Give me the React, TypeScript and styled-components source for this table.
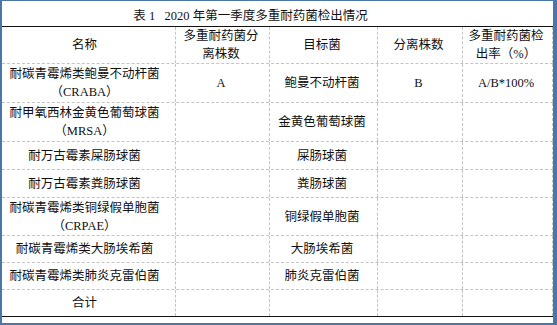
import React from 'react';
import styled, { createGlobalStyle } from 'styled-components';

// 表格数据 - 每行高度按截图量出来
type RowData = {
  name: React.ReactNode;
  isolated?: string;
  target: string;
  count?: string;
  rate?: string;
  height: number;
};

const columns = [174, 94, 108, 85, 90];

const rows: RowData[] = [
  {
    name: (
      <>
        耐碳青霉烯类鲍曼不动杆菌
        <br />
        （CRABA）
      </>
    ),
    isolated: 'A',
    target: '鲍曼不动杆菌',
    count: 'B',
    rate: 'A/B*100%',
    height: 39,
  },
  {
    name: (
      <>
        耐甲氧西林金黄色葡萄球菌
        <br />
        （MRSA）
      </>
    ),
    target: '金黄色葡萄球菌',
    height: 39,
  },
  { name: '耐万古霉素屎肠球菌', target: '屎肠球菌', height: 28 },
  { name: '耐万古霉素粪肠球菌', target: '粪肠球菌', height: 28 },
  {
    name: (
      <>
        耐碳青霉烯类铜绿假单胞菌
        <br />
        （CRPAE）
      </>
    ),
    target: '铜绿假单胞菌',
    height: 38,
  },
  { name: '耐碳青霉烯类大肠埃希菌', target: '大肠埃希菌', height: 27 },
  { name: '耐碳青霉烯类肺炎克雷伯菌', target: '肺炎克雷伯菌', height: 27 },
  { name: '合计', target: '', height: 27 },
];

const App = () => {
  return (
    <>
      <GlobalStyle />
      <Frame>
        <Title>表 1{'\u00a0\u00a0\u00a0'}2020 年第一季度多重耐药菌检出情况</Title>
        {/* 表头 */}
        <Row $h={37}>
          <Cell $w={columns[0]} $first>
            名称
          </Cell>
          <Cell $w={columns[1]}>
            多重耐药菌分
            <br />
            离株数
          </Cell>
          <Cell $w={columns[2]}>目标菌</Cell>
          <Cell $w={columns[3]}>分离株数</Cell>
          <Cell $w={columns[4]}>
            多重耐药菌检
            <br />
            出率（%）
          </Cell>
        </Row>
        {rows.map((row, i) => (
          <Row key={i} $h={row.height} $last={i === rows.length - 1}>
            <Cell $w={columns[0]} $first>
              {row.name}
            </Cell>
            <Cell $w={columns[1]}>{row.isolated}</Cell>
            <Cell $w={columns[2]}>{row.target}</Cell>
            <Cell $w={columns[3]}>{row.count}</Cell>
            <Cell $w={columns[4]}>{row.rate}</Cell>
          </Row>
        ))}
      </Frame>
    </>
  );
};

export default App;

const GlobalStyle = createGlobalStyle`
  html, body {
    margin: 0;
    padding: 0;
    background: #ffffff;
  }
  body {
    font-family: "Liberation Serif", "Noto Sans CJK SC", serif;
    color: #111111;
  }
`;

// 外框 (蓝色边)
const Frame = styled.div`
  width: 557px;
  height: 325px;
  box-sizing: border-box;
  border-style: solid;
  border-color: #4a76a8;
  border-width: 1px 4px 2px 2px;
  background: #ffffff;
  display: flex;
  flex-direction: column;
`;

const Title = styled.div`
  height: 26px;
  box-sizing: border-box;
  border-bottom: 1px solid #111111;
  display: flex;
  align-items: center;
  justify-content: center;
  padding: 2px 54px 0 0;
  font-size: 12.5px;
  white-space: pre;
`;

const Row = styled.div<{ $h: number; $last?: boolean }>`
  display: flex;
  height: ${(p) => p.$h}px;
  box-sizing: border-box;
  border-bottom: ${(p) => (p.$last ? '1px solid #111111' : '1px dashed #c4c4c4')};
`;

const Cell = styled.div<{ $w: number; $first?: boolean }>`
  width: ${(p) => p.$w}px;
  flex: none;
  box-sizing: border-box;
  border-right: 1px dashed #c4c4c4;
  display: flex;
  align-items: center;
  justify-content: center;
  text-align: center;
  padding: ${(p) => (p.$first ? '0 8px 0 0' : '0 3px 0 0')};
  font-size: 12.5px;
  line-height: 18px;
`;
